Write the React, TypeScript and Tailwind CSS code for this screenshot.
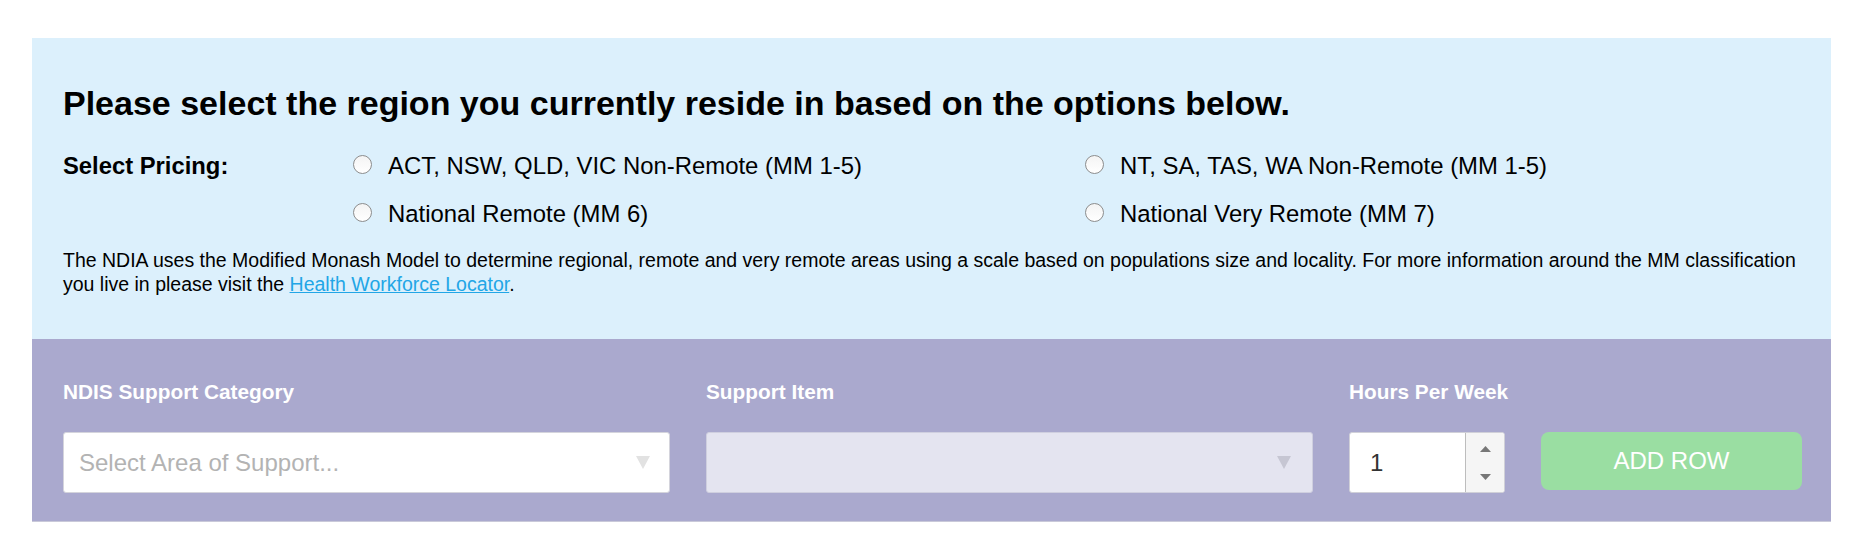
import { useState } from 'react';

const regions = [
  { id: 'mm15a', label: 'ACT, NSW, QLD, VIC Non-Remote (MM 1-5)' },
  { id: 'mm15b', label: 'NT, SA, TAS, WA Non-Remote (MM 1-5)' },
  { id: 'mm6', label: 'National Remote (MM 6)' },
  { id: 'mm7', label: 'National Very Remote (MM 7)' },
];

function Radio({ id, label, checked, onChange }: { id: string; label: string; checked: boolean; onChange: (id: string) => void }) {
  return (
    <label className="flex h-[30px] items-center gap-[16px] cursor-pointer">
      <input
        type="radio"
        name="pricing"
        checked={checked}
        onChange={() => onChange(id)}
        className="mb-[4px] h-[19px] w-[19px] shrink-0 appearance-none rounded-full border border-[#8d8d8d] bg-gradient-to-b from-[#f4f4f4] to-white checked:border-[5px] checked:border-[#1a73e8]"
      />
      <span className="text-[23.9px] leading-[30px] text-black">{label}</span>
    </label>
  );
}

function Arrow({ color }: { color: string }) {
  return (
    <svg width="14" height="13" viewBox="0 0 14 13">
      <polygon points="0,0 14,0 7,13" fill={color} />
    </svg>
  );
}

export default function App() {
  const [region, setRegion] = useState('');
  const [hours, setHours] = useState(1);

  return (
    <div className="min-h-screen bg-white pl-[32px] pr-[26px] pt-[38px] font-['Liberation_Sans',Arial,sans-serif]">
      <section className="bg-[#dcf0fc] px-[31px] pb-[43px] pt-[45px]">
        <h1 className="text-[34px] font-bold leading-[40px] text-black">
          Please select the region you currently reside in based on the options below.
        </h1>

        <div className="mt-[28px] grid grid-cols-[290px_732px_1fr] gap-y-[18px]">
          <div className="flex h-[30px] items-center text-[23.8px] font-bold text-black">Select Pricing:</div>
          <Radio {...regions[0]} checked={region === regions[0].id} onChange={setRegion} />
          <Radio {...regions[1]} checked={region === regions[1].id} onChange={setRegion} />
          <div />
          <Radio {...regions[2]} checked={region === regions[2].id} onChange={setRegion} />
          <Radio {...regions[3]} checked={region === regions[3].id} onChange={setRegion} />
        </div>

        <p className="mt-[20px] text-[19.5px] leading-[23.7px] text-black">
          The NDIA uses the Modified Monash Model to determine regional, remote and very remote areas using a scale based on
          populations size and locality. For more information around the MM classification you live in please visit the{' '}
          <a href="#" className="text-[#22a6e6] underline">Health Workforce Locator</a>.
        </p>
      </section>

      <section className="border-b border-[#c9c9d9] bg-[#aaa9ce] px-[31px] pb-[28px] pt-[40px]">
        <div className="grid grid-cols-[607px_607px_156px_261px] gap-x-[36px] gap-y-[28px]">
          <div className="whitespace-nowrap text-[20.8px] font-bold leading-[25px] text-white">NDIS Support Category</div>
          <div className="whitespace-nowrap text-[20.8px] font-bold leading-[25px] text-white">Support Item</div>
          <div className="whitespace-nowrap text-[20.8px] font-bold leading-[25px] text-white">Hours Per Week</div>
          <div />

          <div className="flex h-[61px] items-center justify-between rounded-[3px] border border-[#d4d4dc] bg-white pl-[15px] pr-[19px]">
            <span className="text-[24px] text-[#b3b3b3]">Select Area of Support...</span>
            <Arrow color="#e2e2e2" />
          </div>

          <div className="flex h-[61px] items-center justify-end rounded-[3px] border border-[#cfcfdf] bg-[#e4e4f0] pr-[21px]">
            <Arrow color="#c6c6d3" />
          </div>

          <div className="flex h-[61px] overflow-hidden rounded-[3px] border border-[#d0d0d8] bg-white">
            <div className="flex flex-1 items-center pl-[20px] text-[24px] text-[#333]">{hours}</div>
            <div className="flex w-[39px] flex-col border-l border-[#bdbdbd] bg-[#f5f5f5]">
              <button onClick={() => setHours(hours + 1)} className="flex flex-1 items-center justify-center pt-[2px]">
                <svg width="11" height="6" viewBox="0 0 11 6"><polygon points="0,6 11,6 5.5,0" fill="#777" /></svg>
              </button>
              <button onClick={() => setHours(Math.max(0, hours - 1))} className="flex flex-1 items-center justify-center pb-[2px]">
                <svg width="11" height="6" viewBox="0 0 11 6"><polygon points="0,0 11,0 5.5,6" fill="#777" /></svg>
              </button>
            </div>
          </div>

          <button className="flex h-[58px] items-center justify-center rounded-[8px] bg-[#9adea2] text-[24px] text-white">
            ADD ROW
          </button>
        </div>
      </section>
    </div>
  );
}
